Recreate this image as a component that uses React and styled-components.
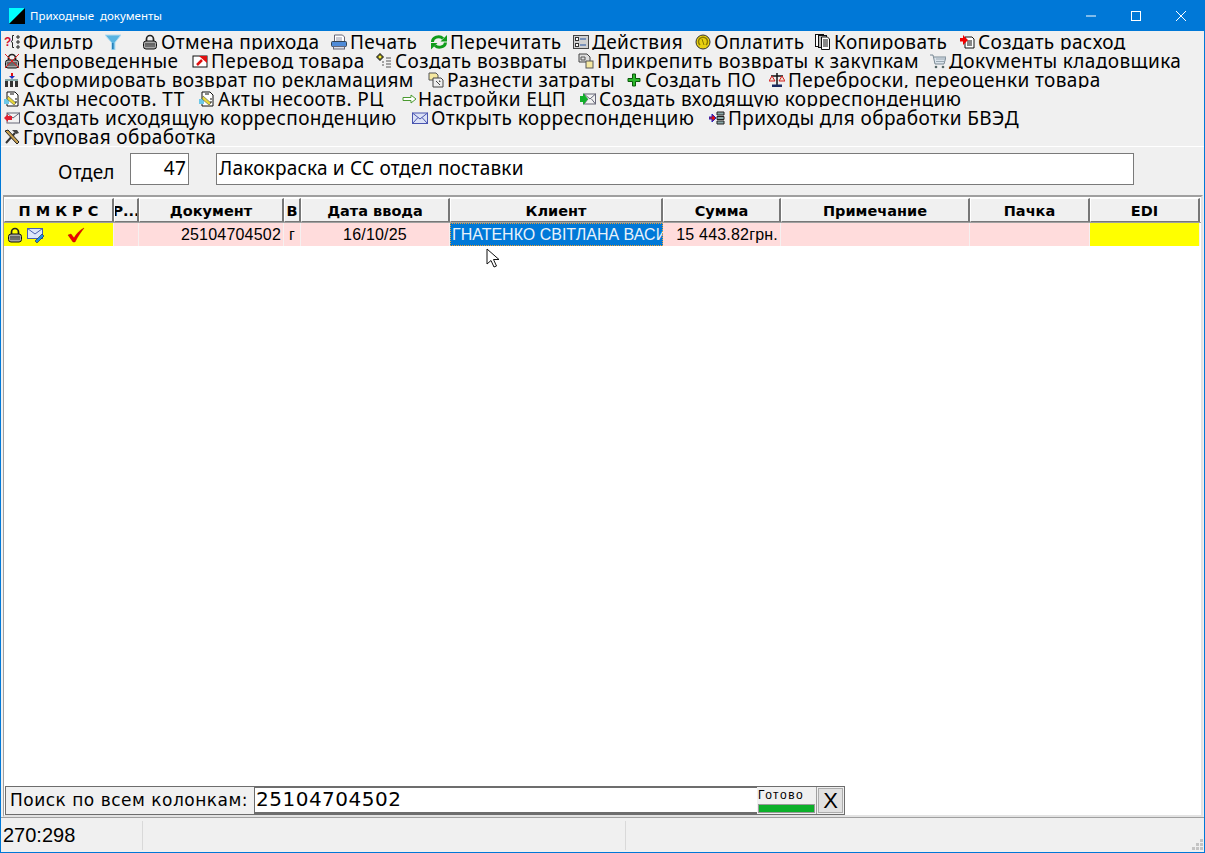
import styled, { createGlobalStyle } from 'styled-components'

const GlobalStyle = createGlobalStyle`
    html, body {
        margin: 0;
        padding: 0;
        overflow: hidden;
        background: #f0f0f0;
    }
    * {
        box-sizing: border-box;
    }
`

const Window = styled.div`
    position: relative;
    width: 1205px;
    height: 853px;
    display: flex;
    flex-direction: column;
    background: #f0f0f0;
    border: 1px solid #0078d7;
    border-top: none;
    font-family: "Liberation Sans", Arial, sans-serif;
    color: #000;
`

const TitleBar = styled.div`
    height: 31px;
    flex: none;
    margin: 0 -1px;
    padding-left: 9px;
    display: flex;
    align-items: center;
    background: #0078d7;
    color: #fff;
`

const TitleText = styled.span`
    margin-left: 5px;
    font-family: "Noto Sans", sans-serif;
    font-size: 11.5px;
    white-space: pre;
`

const WindowButtons = styled.div`
    margin-left: auto;
    padding-right: 2px;
    display: flex;
`

const WindowButton = styled.div`
    width: 45px;
    height: 31px;
    display: flex;
    align-items: center;
    justify-content: center;
`

const Toolbar = styled.div`
    flex: none;
    height: 115px;
    display: flex;
    flex-direction: column;
    padding-left: 2px;
`

const ToolRow = styled.div`
    height: 19px;
    flex: none;
    display: flex;
    overflow: ${({ $open }) => ($open ? 'visible' : 'hidden')};
`

const ToolItem = styled.div`
    flex: none;
    width: ${({ $w }) => $w}px;
    height: 19px;
    display: flex;
    white-space: nowrap;
    font-family: "Noto Sans", sans-serif;
    font-size: 19px;
    line-height: 22px;
    letter-spacing: 0.4px;
`

const ToolIcon = styled.svg`
    flex: none;
    width: 16px;
    height: 16px;
    margin: 3px ${({ $gap }) => $gap ?? 3}px 0 1px;
`

const FilterPanel = styled.div`
    flex: none;
    height: 49px;
    border-top: 1px solid #fff;
    display: flex;
    align-items: flex-start;
    padding: 6px 0 0 57px;
`

const FilterLabel = styled.div`
    width: 72px;
    padding-top: 9px;
    font-family: "Noto Sans", sans-serif;
    font-size: 19px;
    line-height: 20px;
    letter-spacing: 0.2px;
`

const FilterInput = styled.div`
    height: 32px;
    width: ${({ $w }) => $w}px;
    margin-right: ${({ $mr }) => $mr || 0}px;
    padding: 0 2px;
    border: 1px solid #7a7a7a;
    background: #fff;
    font-family: "Noto Sans", sans-serif;
    font-size: 19px;
    line-height: 29px;
    letter-spacing: 0.2px;
    text-align: ${({ $right }) => ($right ? 'right' : 'left')};
`

const TableFrame = styled.div`
    flex: 1;
    min-height: 0;
    margin: 0 1px 0 2px;
    display: flex;
    flex-direction: column;
    background: #fff;
    border-top: 2px solid #a0a0a0;
    border-left: 1px solid #a0a0a0;
    border-right: 2px solid #e3e3e3;
    border-bottom: 2px solid #e3e3e3;
`

const grid = '110px 25px 145px 17px 149px 213px 118px 189px 120px 110px'

const HeaderRow = styled.div`
    margin: 1px 0 0 0;
    height: 25px;
    flex: none;
    display: grid;
    grid-template-columns: ${grid};
    border-bottom: 1px solid #a0a0a0;
`

const HeaderCell = styled.div`
    display: flex;
    align-items: center;
    justify-content: center;
    padding-top: 1px;
    background: #f0f0f0;
    border-top: 1px solid #fff;
    border-right: 2px solid #777;
    border-left: 1px solid #fff;
    border-bottom: 1px solid #777;
    font-family: "DejaVu Sans", sans-serif;
    font-weight: 700;
    font-size: 14.5px;
    white-space: nowrap;
    overflow: hidden;
`

const DataRow = styled.div`
    height: 23px;
    flex: none;
    display: grid;
    grid-template-columns: ${grid};
    font-size: 16px;
`

const DataCell = styled.div`
    display: flex;
    align-items: center;
    justify-content: ${({ $align }) => $align || 'center'};
    padding: 0 2px;
    background: ${({ $bg }) => $bg || '#ffdcdc'};
    border-right: 1px solid #f5f0f0;
    white-space: nowrap;
    overflow: hidden;
    letter-spacing: 0.2px;
`

const SelectedCell = styled(DataCell)`
    background: #0078d7;
    color: #e8f2fb;
    padding: 0 0 0 2px;
    outline: 1px dotted #f0a030;
    outline-offset: -1px;
    border-right: none;
    letter-spacing: 0;
`

const MarkIcons = styled.div`
    display: flex;
    align-items: center;
    width: 100%;
    gap: 4px;
    padding-left: 1px;
`

const CheckIcon = styled.svg`
    margin-left: 18px;
`

const TableSpace = styled.div`
    flex: 1;
`

const SearchBar = styled.div`
    flex: none;
    width: 840px;
    height: 29px;
    margin-left: 1px;
    display: flex;
    border: 1px solid #6d6d6d;
    background: #f0f0f0;
`

const SearchLabel = styled.div`
    width: 248px;
    padding-left: 4px;
    font-family: "DejaVu Sans", sans-serif;
    font-size: 17px;
    line-height: 26px;
    letter-spacing: 0.5px;
    white-space: nowrap;
`

const SearchInput = styled.div`
    width: 503px;
    padding-left: 1px;
    background: #fff;
    border-left: 1px solid #6d6d6d;
    border-top: 1px solid #6d6d6d;
    border-bottom: 2px solid #6d6d6d;
    font-family: "DejaVu Sans", sans-serif;
    font-size: 20px;
    line-height: 23px;
    letter-spacing: 0.5px;
`

const ReadyBox = styled.div`
    width: 60px;
    display: flex;
    flex-direction: column;
    border-right: 1px solid #a0a0a0;
    padding: 0 1px 1px;
`

const ReadyText = styled.div`
    flex: 1;
    font-size: 12px;
    line-height: 17px;
    letter-spacing: 1.5px;
`

const ReadyBar = styled.div`
    height: 9px;
    background: #0cb02a;
    border: 1px solid #9a9a9a;
`

const CloseButton = styled.div`
    flex: 1;
    margin: 1px;
    background: #e1e1e1;
    border: 1px solid #adadad;
    font-size: 22px;
    line-height: 24px;
    text-align: center;
`

const StatusBar = styled.div`
    flex: none;
    height: 35px;
    display: flex;
    align-items: stretch;
    padding: 3px 0 2px;
    border-top: 1px solid #a0a0a0;
    position: relative;
`

const StatusPane = styled.div`
    width: ${({ $w }) => $w}px;
    border-right: 1px solid #d9d9d9;
    padding-left: 2px;
    font-size: 20px;
    line-height: 29px;
`

const Grip = styled.svg`
    position: absolute;
    right: 1px;
    bottom: 1px;
    width: 12px;
    height: 12px;
`

const Cursor = styled.svg`
    position: absolute;
    left: 485px;
    top: 248px;
    width: 15px;
    height: 21px;
`

const LockIcon = () => (
    <>
        <path d="M4.500 7V5a3.500 3.500 0 0 1 7 0v2" fill="none" stroke="#222" strokeWidth="1.700" />
        <rect x="1.500" y="7" width="13" height="8" rx="2.500" fill="#a8a8a8" stroke="#111" />
        <rect x="3" y="9.500" width="10" height="1" fill="#222" />
        <rect x="3" y="11.500" width="10" height="1" fill="#333" />
    </>
)

const icons = {
    filter: (
        <>
            <text x="0" y="12" fontSize="12" fontWeight="700" fill="#d01030" fontFamily="Liberation Sans">?</text>
            <path d="M10 1.500H8.500v5l-1.500 1 1.500 1v5H10M13 2h2v2h-2zM13 7h2v2h-2zM13 12h2v2h-2z" fill="none" stroke="#222" />
        </>
    ),
    funnel: (
        <>
            <path d="M0 1h16L10 8.500V16H6.500V8.500z" fill="#58b4e2" stroke="#b5dcf0" />
            <path d="M7 9h1.500v6H7z" fill="#2a80b8" />
        </>
    ),
    lock: <LockIcon />,
    print: (
        <>
            <path d="M3.500 1h8l2 2v5h-10z" fill="#fff" stroke="#667" />
            <path d="M5 4h6M5 6h6" stroke="#99a" />
            <rect x="0.500" y="7.500" width="15" height="5" rx="1" fill="#4f8bd8" stroke="#345" />
            <rect x="2.500" y="12.500" width="11" height="2.500" fill="#dde2ec" stroke="#667" />
        </>
    ),
    reload: (
        <>
            <path d="M1.500 8a6 5 0 0 1 10.500-3.500" fill="none" stroke="#109c1c" strokeWidth="3" />
            <path d="M9.500 7.500H16V1z" fill="#109c1c" />
            <path d="M14.500 8.500a6 5 0 0 1-10.500 3" fill="none" stroke="#109c1c" strokeWidth="3" />
            <path d="M6.500 9H0v6.500z" fill="#109c1c" />
        </>
    ),
    actions: (
        <>
            <rect x="0.500" y="1.500" width="15" height="13" fill="#d0d0d0" stroke="#444" />
            <rect x="2.500" y="3.500" width="3" height="3" fill="#fff" stroke="#333" />
            <rect x="2.500" y="9.500" width="3" height="3" fill="#fff" stroke="#333" />
            <path d="M7 5h6M7 11h6" stroke="#2050a0" />
        </>
    ),
    coin: (
        <>
            <circle cx="8" cy="8" r="7" fill="#e8d010" stroke="#333" />
            <path d="M5 11a4.500 4.500 0 1 1 6 0" fill="none" stroke="#8a7a00" strokeWidth="1.500" />
            <path d="M7 5l2 6" stroke="#8a7a00" />
        </>
    ),
    copy: (
        <>
            <rect x="0.500" y="0.500" width="8" height="12" fill="#fff" stroke="#111" />
            <rect x="3.500" y="1.500" width="8" height="12" fill="#bbb" stroke="#111" />
            <path d="M6.500 3h6l2 2v10.500h-8z" fill="#fff" stroke="#111" />
            <path d="M8 6h5M8 8h5M8 10h5M8 12h5" stroke="#111" />
        </>
    ),
    outDoc: (
        <>
            <path d="M6 3h7l2 2v9H6z" fill="#fff" stroke="#111" />
            <path d="M8 7h5M8 9h5M8 11h5" stroke="#111" />
            <path d="M1 4h3V1l5 5-5 5V7.500H1z" fill="#f00000" />
        </>
    ),
    noLock: (
        <>
            <LockIcon />
            <path d="M1 1l14 14M15 1L1 15" stroke="#e02020" />
        </>
    ),
    move: (
        <>
            <rect x="1" y="3" width="14" height="11" fill="#fff" stroke="#111" />
            <path d="M5 12l5-5" stroke="#e01010" strokeWidth="2.500" />
            <path d="M7 3h8v7z" fill="#e01010" />
        </>
    ),
    returns: (
        <>
            <path d="M3 1h2v2h2v2H5v2H3V5H1V3h2z" fill="#f8f040" stroke="#111" />
            <path d="M10 5h5M10 8h5M10 11h5M10 14h5M6 9h2M6 12h2" stroke="#555" />
        </>
    ),
    attach: (
        <>
            <path d="M1 1h8l3 3v5H1z" fill="#ddd" stroke="#444" />
            <path d="M3 4h4v3H3z" fill="none" stroke="#555" />
            <rect x="8" y="8" width="7" height="7" fill="#f5e8a0" stroke="#555" />
        </>
    ),
    cart: (
        <>
            <path d="M0 2h3l2 9h9l2-7H4" fill="#dbe4ec" stroke="#7b8a95" />
            <path d="M6 6h9M6 8.500h8" stroke="#9aa8b2" />
            <circle cx="6" cy="14" r="1.300" fill="#566" />
            <circle cx="13" cy="14" r="1.300" fill="#566" />
        </>
    ),
    factory: (
        <>
            <path d="M8 1v4" stroke="#e01010" strokeWidth="2" />
            <path d="M5 4h6l-3 3z" fill="#2030c0" />
            <path d="M1 9h3v6H1zM6 9h3v6H6zM11 9h3v6h-3z" fill="#333" />
            <rect x="1" y="7" width="13" height="2" fill="#8aa" />
        </>
    ),
    costs: (
        <>
            <path d="M1 1h7l2 2v5H1z" fill="#f5e8a0" stroke="#555" />
            <path d="M5 6h8l2 2v7H5z" fill="#eee" stroke="#444" />
            <path d="M8 9l4 4M11 9h1v1" stroke="#444" />
        </>
    ),
    plus: <path d="M6.500 2h3v4.500H14v3H9.500V14h-3V9.500H2v-3h4.500z" fill="#2cb82c" stroke="#0a5a0a" />,
    scales: (
        <>
            <path d="M8 1v12M2 4h12" stroke="#111" strokeWidth="1.500" />
            <path d="M0 9l3-5 3 5zM10 9l3-5 3 5z" fill="#f0e0d0" stroke="#d02020" />
            <rect x="3" y="12.500" width="10" height="2.500" fill="#1a2a60" />
        </>
    ),
    act: (
        <>
            <path d="M3 1h8l3 3v11H3z" fill="#fff" stroke="#111" />
            <path d="M0 8h5v5H0z" fill="#6cc8e8" />
            <path d="M4 5l8 7-2 2-7-6z" fill="#e8d838" stroke="#665" strokeWidth=".7" />
            <path d="M6 3h4M11 8h2M11 11h2" stroke="#111" />
        </>
    ),
    arrow: <path d="M1 6.500h8V4l5 4-5 4V9.500H1z" fill="#fff" stroke="#4a9a30" />,
    mailIn: (
        <>
            <rect x="4" y="3" width="11.500" height="10" fill="#f2f2f2" stroke="#667" />
            <path d="M4 3l6 5 5.500-5M4 13l4-5M15.500 13l-4-5" fill="none" stroke="#667" />
            <path d="M0 5h3V2l5 6-5 6v-3H0z" fill="#12b02a" />
        </>
    ),
    mailOut: (
        <>
            <rect x="3" y="3" width="12.500" height="10" fill="#f2f2f2" stroke="#667" />
            <path d="M3 3l6 5 6.500-5" fill="none" stroke="#667" />
            <path d="M0 8l4-4v2h4v4H4v2z" fill="#e02030" />
        </>
    ),
    mail: (
        <>
            <rect x="0.500" y="3" width="15" height="10.500" fill="#dce2f6" stroke="#4a55b0" />
            <path d="M.5 3L8 9l7.500-6M.5 13.500L6 7.500M15.500 13.500L10 7.500" fill="none" stroke="#4a55b0" />
        </>
    ),
    bved: (
        <>
            <path d="M0 7h3V4l4 4-4 4V9H0z" fill="#e01010" stroke="#2020c0" />
            <path d="M8 2h7v3H8zM8 6.500h7v3H8zM8 11h7v3H8z" fill="#8aa8a8" stroke="#222" />
        </>
    ),
    tools: (
        <>
            <path d="M2 14L11 4" stroke="#333" strokeWidth="2" />
            <path d="M1 2l3-1 11 12-2 2z" fill="#c8a050" stroke="#222" />
            <path d="M8 1h5l2 3-3 1z" fill="#444" />
        </>
    ),
}

const toolRows = [
    {
        items: [
            { icon: 'filter', label: 'Фильтр', w: 101 },
            { icon: 'funnel', label: '', w: 37 },
            { icon: 'lock', label: 'Отмена прихода', w: 189 },
            { icon: 'print', label: 'Печать', w: 100 },
            { icon: 'reload', label: 'Перечитать', w: 142 },
            { icon: 'actions', label: 'Действия', w: 122 },
            { icon: 'coin', label: 'Оплатить', w: 120 },
            { icon: 'copy', label: 'Копировать', w: 144 },
            { icon: 'outDoc', label: 'Создать расход', w: 190 },
        ],
    },
    {
        items: [
            { icon: 'noLock', label: 'Непроведенные', w: 188 },
            { icon: 'move', label: 'Перевод товара', w: 184 },
            { icon: 'returns', label: 'Создать возвраты', w: 202 },
            { icon: 'attach', label: 'Прикрепить возвраты к закупкам', w: 352 },
            { icon: 'cart', label: 'Документы кладовщика', w: 250 },
        ],
    },
    {
        items: [
            { icon: 'factory', label: 'Сформировать возврат по рекламациям', w: 424 },
            { icon: 'costs', label: 'Разнести затраты', w: 198 },
            { icon: 'plus', label: 'Создать ПО', w: 143 },
            { icon: 'scales', label: 'Переброски, переоценки товара', w: 340 },
        ],
    },
    {
        items: [
            { icon: 'act', label: 'Акты несоотв. ТТ', w: 195 },
            { icon: 'act', label: 'Акты несоотв. РЦ', w: 203 },
            { icon: 'arrow', label: 'Настройки ЕЦП', w: 178, gap: 0 },
            { icon: 'mailIn', label: 'Создать входящую корреспонденцию', w: 400 },
        ],
    },
    {
        open: true,
        items: [
            { icon: 'mailOut', label: 'Создать исходящую корреспонденцию', w: 408 },
            { icon: 'mail', label: 'Открыть корреспонденцию', w: 297 },
            { icon: 'bved', label: 'Приходы для обработки БВЭД', w: 320 },
        ],
    },
    {
        items: [{ icon: 'tools', label: 'Груповая обработка', w: 240 }],
    },
]

const headers = ['П М К Р С', 'Р...', 'Документ', 'В', 'Дата ввода', 'Клиент', 'Сумма', 'Примечание', 'Пачка', 'EDI']

function App() {
    return (
        <Window>
            <GlobalStyle />
            <TitleBar>
                <svg width="16" height="16" viewBox="0 0 16 16">
                    <path d="M0 0h16L0 16z" fill="#00ffff" />
                    <path d="M16 0v16H0z" fill="#000" />
                </svg>
                <TitleText>Приходные  документы</TitleText>
                <WindowButtons>
                    <WindowButton>
                        <svg width="10" height="10" viewBox="0 0 10 10"><path d="M0 5h10" stroke="#fff" /></svg>
                    </WindowButton>
                    <WindowButton>
                        <svg width="10" height="10" viewBox="0 0 10 10"><rect x=".5" y=".5" width="9" height="9" fill="none" stroke="#fff" /></svg>
                    </WindowButton>
                    <WindowButton>
                        <svg width="10" height="10" viewBox="0 0 10 10"><path d="M0 0l10 10M10 0L0 10" stroke="#fff" /></svg>
                    </WindowButton>
                </WindowButtons>
            </TitleBar>

            <Toolbar>
                {toolRows.map((row, i) => (
                    <ToolRow key={i} $open={row.open}>
                        {row.items.map((item, j) => (
                            <ToolItem key={j} $w={item.w}>
                                <ToolIcon viewBox="0 0 16 16" $gap={item.gap}>{icons[item.icon]}</ToolIcon>
                                {item.label}
                            </ToolItem>
                        ))}
                    </ToolRow>
                ))}
            </Toolbar>

            <FilterPanel>
                <FilterLabel>Отдел</FilterLabel>
                <FilterInput $w={59} $mr={27} $right>47</FilterInput>
                <FilterInput $w={918}>Лакокраска и СС отдел поставки</FilterInput>
            </FilterPanel>

            <TableFrame>
                <HeaderRow>
                    {headers.map(h => <HeaderCell key={h}>{h}</HeaderCell>)}
                </HeaderRow>
                <DataRow>
                    <DataCell $bg="#ffff00">
                        <MarkIcons>
                            <svg width="16" height="16" viewBox="0 0 16 16"><LockIcon /></svg>
                            <svg width="18" height="16" viewBox="0 0 18 16">
                                <rect x=".5" y="1.500" width="15" height="10" fill="#dce6fa" stroke="#4a60b0" />
                                <path d="M.5 1.500L8 7l7.500-5.500" fill="none" stroke="#4a60b0" />
                                <path d="M8 14l7-7 2 2-7 7z" fill="#2090e0" stroke="#224" strokeWidth=".6" />
                            </svg>
                            <CheckIcon width="18" height="16" viewBox="0 0 18 16">
                                <path d="M1 8l3-1 3 4c3-5 6-8 10-10-3 4-6 8-9 14H6z" fill="#f00000" stroke="#900" strokeWidth=".4" />
                            </CheckIcon>
                        </MarkIcons>
                    </DataCell>
                    <DataCell />
                    <DataCell $align="flex-end">25104704502</DataCell>
                    <DataCell>г</DataCell>
                    <DataCell>16/10/25</DataCell>
                    <SelectedCell $align="flex-start">ГНАТЕНКО СВІТЛАНА ВАСИЛІВНА</SelectedCell>
                    <DataCell $align="flex-end">15 443.82грн.</DataCell>
                    <DataCell />
                    <DataCell />
                    <DataCell $bg="#ffff00" />
                </DataRow>
                <TableSpace />
                <SearchBar>
                    <SearchLabel>Поиск по всем колонкам:</SearchLabel>
                    <SearchInput>25104704502</SearchInput>
                    <ReadyBox>
                        <ReadyText>Готово</ReadyText>
                        <ReadyBar />
                    </ReadyBox>
                    <CloseButton>X</CloseButton>
                </SearchBar>
            </TableFrame>

            <StatusBar>
                <StatusPane $w={142}>270:298</StatusPane>
                <StatusPane $w={483} />
                <Grip viewBox="0 0 12 12">
                    <path d="M9 0h3v3H9zM5 4h3v3H5zM9 4h3v3H9zM1 8h3v3H1zM5 8h3v3H5zM9 8h3v3H9z" fill="#c4c4c4" />
                </Grip>
            </StatusBar>

            <Cursor viewBox="0 0 15 21">
                <path d="M1 1v15l4-3.500 3 6.500 2.500-1-3-6.500H13z" fill="#fff" stroke="#111" />
            </Cursor>
        </Window>
    )
}

export default App
